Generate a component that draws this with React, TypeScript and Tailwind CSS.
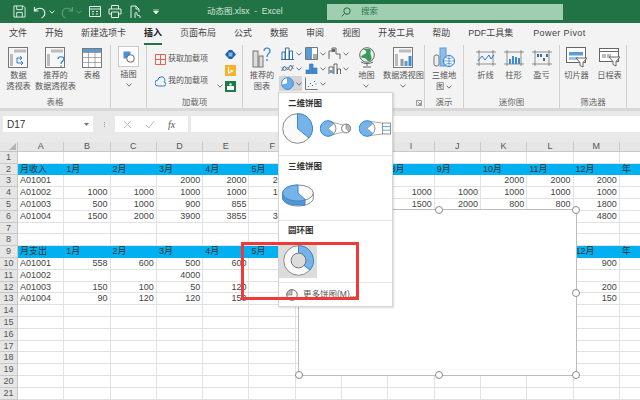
import type { ReactNode } from "react";

const tabs = ["文件", "开始", "新建选项卡", "插入", "页面布局", "公式", "数据", "审阅", "视图", "开发工具", "帮助", "PDF工具集", "Power Pivot"];
const cols = ["A", "B", "C", "D", "E", "F", "G", "H", "I", "J", "K", "L", "M", "N"];
const months = ["1月", "2月", "3月", "4月", "5月", "6月", "7月", "8月", "9月", "10月", "11月", "12月", "年"];

type Row = Record<string, string>;
const rows: Record<number, Row> = {
  3: { A: "A01001", D: "2000", E: "2000", F: "2000", K: "2000", L: "2000", M: "2000" },
  4: { A: "A01002", B: "1000", C: "1000", D: "1000", E: "1000", F: "1000", I: "1000", J: "1000", K: "1000", L: "1000", M: "1000" },
  5: { A: "A01003", B: "500", C: "1000", D: "900", E: "855", I: "1500", J: "2000", K: "800", L: "800", M: "1800" },
  6: { A: "A01004", B: "1500", C: "2000", D: "3900", E: "3855", F: "3000", M: "4800" },
  10: { A: "A01001", B: "558", C: "600", D: "500", E: "600", M: "900" },
  11: { A: "A01002", D: "4000" },
  12: { A: "A01003", B: "150", C: "100", D: "50", E: "120", M: "200" },
  13: { A: "A01004", B: "90", C: "120", D: "120", E: "150", M: "150" },
};

const rowNumbers = Array.from({ length: 21 }, (_, i) => i + 1);

function Chevron({ className = "" }: { className?: string }) {
  return (
    <svg width="6" height="4" viewBox="0 0 6 4" className={className}>
      <path d="M0.6 0.6 3 3.2 5.4 0.6" fill="none" stroke="#666" strokeWidth="0.9" />
    </svg>
  );
}

function Group({ label, width, children, launcher }: { label: string; width: string; children: ReactNode; launcher?: boolean }) {
  return (
    <div className={`relative flex h-[63px] shrink-0 flex-col border-r border-[#d0d0d0] ${width}`}>
      <div className="flex min-h-0 flex-1">{children}</div>
      <div className="h-[12px] pb-[1px] text-center text-[8.5px] leading-[12px] text-[#666]">{label}</div>
      {launcher && (
        <svg width="6" height="6" viewBox="0 0 6 6" className="absolute bottom-[2px] right-[2px]">
          <path d="M0.5 0.5H5.5V5.5H0.5Z M1.5 1.5 4.5 4.5 M4.5 2.5V4.5H2.5" fill="none" stroke="#777" strokeWidth="0.7" />
        </svg>
      )}
    </div>
  );
}

function BigButton({ width, icon, lines, chevron }: { width: string; icon: ReactNode; lines: string[]; chevron?: boolean }) {
  return (
    <div className={`flex shrink-0 flex-col items-center ${width}`}>
      <div className="flex h-[25px] items-center justify-center">{icon}</div>
      <div className="flex flex-col items-center whitespace-nowrap text-[8.2px] leading-[11px] text-[#555]">
        {lines.map((l) => (
          <span key={l}>{l}</span>
        ))}
        {chevron && <Chevron className="mt-[3px]" />}
      </div>
    </div>
  );
}

function SheetIcon({ accent }: { accent: "arrows" | "help" }) {
  return (
    <svg width="22" height="21" viewBox="0 0 22 21">
      <rect x="0.5" y="0.5" width="19" height="20" fill="#f7f7f7" stroke="#777" />
      <rect x="6" y="2.5" width="12" height="3" fill="#bbb" />
      <rect x="2" y="7" width="3" height="12" fill="#bbb" />
      {accent === "arrows" ? (
        <path d="M9 16V11H14M12 9l2 2-2 2M9 16h6M13 14l2 2-2 2" fill="none" stroke="#2b7cd3" strokeWidth="1" />
      ) : (
        <path d="M13 12c0-3 6-3 6 0 0 2-3 2-3 5M16 18.5v1.5" fill="none" stroke="#2b7cd3" strokeWidth="1.2" />
      )}
    </svg>
  );
}

function TableIcon() {
  return (
    <svg width="20" height="20" viewBox="0 0 20 20">
      <rect x="0.5" y="0.5" width="19" height="19" fill="#fff" stroke="#777" />
      <rect x="1" y="1" width="18" height="3.5" fill="#5b9bd5" />
      <path d="M0.5 4.5H19.5M0.5 9.5H19.5M0.5 14.5H19.5M6.5 1V19M13 1V19" stroke="#888" strokeWidth="0.7" />
    </svg>
  );
}

function Pie({ size = 31 }: { size?: number }) {
  return (
    <svg width={size} height={size} viewBox="0 0 31 31">
      <circle cx="15.5" cy="15.5" r="14.8" fill="#fafafa" stroke="#8a8a8a" />
      <path d="M15.5 15.5V0.7A14.8 14.8 0 0 1 27 25Z" fill="#76b3e8" stroke="#3a87cc" />
    </svg>
  );
}

function PieOfPie() {
  return (
    <svg width="32" height="17" viewBox="0 0 32 17">
      <path d="M8 1 23 5M8 16 23 12" stroke="#888" strokeWidth="0.7" />
      <circle cx="8" cy="8.5" r="7.8" fill="#76b3e8" stroke="#3a87cc" />
      <path d="M8 8.5 14 3.5A7.8 7.8 0 0 1 14 13.5Z" fill="#fff" stroke="#888" strokeWidth="0.7" />
      <circle cx="26" cy="8.5" r="4.4" fill="#fff" stroke="#777" />
      <path d="M26 8.5V4.1A4.4 4.4 0 0 1 29 12Z" fill="#b5b5b5" stroke="#777" strokeWidth="0.6" />
    </svg>
  );
}

function BarOfPie() {
  return (
    <svg width="32" height="17" viewBox="0 0 32 17">
      <path d="M8 1 23 3M8 16 23 14" stroke="#888" strokeWidth="0.7" />
      <circle cx="8" cy="8.5" r="7.8" fill="#76b3e8" stroke="#3a87cc" />
      <path d="M8 8.5 14 3.5A7.8 7.8 0 0 1 14 13.5Z" fill="#fff" stroke="#888" strokeWidth="0.7" />
      <rect x="23.5" y="3" width="8" height="11" fill="#fff" stroke="#777" strokeWidth="0.8" />
      <path d="M23.5 6.6H31.5M23.5 10.2H31.5" stroke="#5b9bd5" strokeWidth="0.9" />
    </svg>
  );
}

function Pie3d() {
  return (
    <svg width="32" height="23" viewBox="0 0 32 23">
      <path d="M0.7 9V14C0.7 18.5 7.5 22 16 22S31.3 18.5 31.3 14V9Z" fill="#fff" stroke="#888" />
      <path d="M0.7 9V14C0.7 18.5 7 21.6 23 21V14.5L15 9Z" fill="#4f97d8" stroke="#3a87cc" />
      <ellipse cx="16" cy="9" rx="15.3" ry="8" fill="#fafafa" stroke="#8a8a8a" />
      <path d="M16 9V1C7.5 1 0.7 4.5 0.7 9S7.5 17 16 17C19 17 21.5 16.5 23.5 15.8Z" fill="#76b3e8" stroke="#3a87cc" />
    </svg>
  );
}

function Donut({ size = 31 }: { size?: number }) {
  return (
    <svg width={size} height={size} viewBox="0 0 31 31">
      <circle cx="15.5" cy="15.5" r="14.8" fill="#fafafa" stroke="#8a8a8a" />
      <path d="M15.5 0.7A14.8 14.8 0 0 1 27 25L21 20.5A7.4 7.4 0 0 0 15.5 8.1Z" fill="#76b3e8" stroke="#3a87cc" />
      <circle cx="15.5" cy="15.5" r="7.4" fill="#dcdcdc" stroke="#777" />
    </svg>
  );
}

function SmallIcon({ children, active }: { children: ReactNode; active?: boolean }) {
  return (
    <div className={`flex h-[15px] w-[23px] items-center gap-[2px] pl-[2px] ${active ? "bg-[#d4d4d4]" : ""}`}>
      <svg width="13" height="13" viewBox="0 0 13 13" className="shrink-0">
        {children}
      </svg>
      <Chevron />
    </div>
  );
}

function Handle({ position }: { position: string }) {
  return <div className={`absolute h-[8px] w-[8px] rounded-full border border-[#8a8a8a] bg-white ${position}`} />;
}

export default function App() {
  return (
    <div className="relative flex h-[400px] w-[640px] flex-col overflow-hidden bg-white font-['Liberation_Sans','Noto_Sans_CJK_SC',sans-serif] text-[#444]">
      {/* title bar */}
      <div className="flex h-[23px] shrink-0 items-center bg-[#217346] pl-[13px]">
        <svg width="13" height="13" viewBox="0 0 14 14" fill="none" stroke="#e4efe8" strokeWidth="1">
          <path d="M1 1H11L13 3V13H1Z M4 1V5H10V1 M4 13V8H10V13" />
        </svg>
        <svg width="14" height="14" viewBox="0 0 14 14" fill="none" stroke="#e4efe8" strokeWidth="1.2" className="ml-[7px]">
          <path d="M1.5 2V6H5.5M1.5 6C4 2.5 10 2 11.5 6.5 12.5 9.5 10.5 12 8.5 13" />
        </svg>
        <Chevron className="ml-[2px] brightness-[3]" />
        <svg width="14" height="14" viewBox="0 0 14 14" fill="none" stroke="#5f9c7b" strokeWidth="1.2" className="ml-[5px]">
          <path d="M12.5 2V6H8.5M12.5 6C10 2.5 4 2 2.5 6.5 1.5 9.5 3.5 12 5.5 13" />
        </svg>
        <svg width="6" height="4" viewBox="0 0 6 4" className="ml-[2px]">
          <path d="M0.6 0.6 3 3.2 5.4 0.6" fill="none" stroke="#5f9c7b" />
        </svg>
        <svg width="12" height="11" viewBox="0 0 12 11" fill="none" stroke="#e4efe8" className="ml-[7px]">
          <path d="M0.5 0.5H11.5V10.5H0.5Z M0.5 3H11.5 M3 5.5H5 M3 8H5 M7 5.5H9 M7 8H9" />
        </svg>
        <svg width="14" height="13" viewBox="0 0 14 13" fill="none" stroke="#e4efe8" className="ml-[7px]">
          <path d="M3.5 4V0.5H10.5V4 M3.5 9H1V4H13V9H10.5 M3.5 7H10.5V12.5H3.5Z" />
        </svg>
        <svg width="11" height="14" viewBox="0 0 11 14" fill="none" stroke="#e4efe8" className="ml-[8px]">
          <path d="M1 13V1H6L9 4V7 M6 1V4H9 M5 13V8.5A1 1 0 0 1 7 8.5V10L10 11V13" />
        </svg>
        <svg width="6" height="5" viewBox="0 0 6 5" className="ml-[12px]">
          <path d="M0 0H6M0.5 2 3 5 5.5 2Z" stroke="#e4efe8" strokeWidth="0.8" fill="#e4efe8" />
        </svg>
        <span className="ml-[48px] w-[120px] whitespace-pre text-[8.5px] text-[#d3e6da]">动态图.xlsx  -  Excel</span>
        <div className="flex h-[16px] w-[236px] items-center bg-[#9fcfb0] pl-[14px]">
          <svg width="10" height="10" viewBox="0 0 10 10" fill="none" stroke="#1f6b40">
            <circle cx="6" cy="4" r="3.2" />
            <path d="M3.6 6.4 0.6 9.4" />
          </svg>
          <span className="ml-[10px] text-[8.5px] text-[#2a7a4c]">搜索</span>
        </div>
      </div>

      {/* tabs */}
      <div className="flex h-[22px] shrink-0 items-center gap-[18px] bg-[#f3f3f3] pl-[9px] text-[9px] text-[#444]">
        {tabs.map((t) => (
          <div key={t} className={`relative flex h-full items-center whitespace-nowrap ${t === "Power Pivot" ? "ml-[2px] tracking-[0.4px]" : ""}`}>
            <span className={t === "插入" ? "font-bold text-[#222]" : ""}>{t}</span>
            {t === "插入" && <div className="absolute bottom-[0px] left-0 right-0 h-[2px] bg-[#217346]" />}
          </div>
        ))}
      </div>

      {/* ribbon */}
      <div className="flex h-[63px] shrink-0 bg-[#f3f3f3]">
        <Group label="表格" width="w-[111px]">
          <BigButton width="w-[37px]" icon={<SheetIcon accent="arrows" />} lines={["数据", "透视表"]} />
          <BigButton width="w-[37px]" icon={<SheetIcon accent="help" />} lines={["推荐的", "数据透视表"]} />
          <BigButton width="w-[36px]" icon={<TableIcon />} lines={["表格"]} />
        </Group>
        <Group label="" width="w-[36px]">
          <div className="flex w-full flex-col items-center text-[8.2px] leading-[11px] text-[#555]">
            <div className="mt-[1px] flex h-[21px] w-[21px] items-center justify-center border border-[#c8c8c8] bg-white">
              <svg width="12" height="12" viewBox="0 0 12 12">
                <rect x="0.5" y="0.5" width="7" height="7" fill="#4a90d9" />
                <circle cx="7.5" cy="7.5" r="3.8" fill="#fff" stroke="#666" />
              </svg>
            </div>
            <span className="mt-[2px]">插图</span>
            <Chevron className="mt-[3px]" />
          </div>
        </Group>
        <Group label="加载项" width="w-[96px]">
          <div className="flex w-[68px] shrink-0 flex-col gap-[10px] pl-[8px] pt-[8px] text-[8px] leading-[12px] text-[#555]">
            <div className="flex items-center gap-[2px] whitespace-nowrap">
              <svg width="11" height="11" viewBox="0 0 11 11" fill="none" stroke="#e0644a">
                <path d="M0.5 0.5H10.5V10.5H0.5Z M5.5 0.5V10.5 M0.5 5.5H10.5" />
              </svg>
              <span>获取加载项</span>
            </div>
            <div className="flex items-center gap-[2px] whitespace-nowrap">
              <svg width="11" height="12" viewBox="0 0 11 12" fill="none" stroke="#2b7cd3">
                <path d="M3 11H8.5A2 2 0 0 0 9 7 3 3 0 0 0 6 2 3 3 0 0 0 3 5 3 3 0 0 0 3 11Z" />
              </svg>
              <span>我的加载项</span>
            </div>
          </div>
          <div className="flex w-[10px] shrink-0 items-end pb-[8px] pl-[1px]">
            <Chevron className="ml-[1px]" />
          </div>
          <div className="flex flex-col items-center gap-[5.5px] pt-[5px]">
            <svg width="11" height="9" viewBox="0 0 11 9">
              <path d="M0 4.5 4 0H7L11 4.5 7 9H4Z" fill="#1f5fa8" />
              <rect x="3.5" y="2.5" width="4" height="4" fill="#7db4e8" />
            </svg>
            <svg width="11" height="11" viewBox="0 0 11 11">
              <rect width="11" height="11" fill="#f4b32a" />
              <path d="M3.5 2V8L7.5 6 5.5 5" fill="none" stroke="#fff" strokeWidth="1.1" />
            </svg>
            <svg width="11" height="11" viewBox="0 0 11 11">
              <rect width="11" height="11" fill="#1e7a4b" />
              <path d="M2 5H9V9H2Z" fill="#fff" />
              <circle cx="5.5" cy="3.5" r="1.3" fill="#cde8d8" />
            </svg>
          </div>
        </Group>
        <Group label="" width="w-[182px]" launcher>
          <div className="w-[36px] shrink-0 pl-[2px]">
            <BigButton
              width="w-[34px]"
              icon={
                <svg width="20" height="21" viewBox="0 0 20 21" fill="none">
                  <rect x="1" y="4" width="5" height="16" fill="#ddd" stroke="#777" />
                  <rect x="7" y="9" width="4" height="11" fill="#ddd" stroke="#777" />
                  <path d="M12 4c0-4 6-4 6 0 0 2.500-3 2.500-3 6M15 12v2" stroke="#2b7cd3" strokeWidth="1.2" />
                </svg>
              }
              lines={["推荐的", "图表"]}
            />
          </div>
          <div className="grid w-[71px] shrink-0 grid-cols-3 content-start pt-[1px]">
            <SmallIcon>
              <path d="M1 12V5H4V12M4.500 12V1H8V12M8.500 12V4H11.500V12M0 12.500H13" fill="#fff" stroke="#2b6fb5" />
            </SmallIcon>
            <SmallIcon>
              <path d="M0.500 0.500H12.500V12.500H0.500Z" fill="#fff" stroke="#777" />
              <path d="M1 1H7V12H1Z" fill="#5b9bd5" />
              <path d="M8 7H12V12H8Z" fill="#aaa" />
            </SmallIcon>
            <SmallIcon>
              <path d="M1 12V4H4V1H8V7H12V12" fill="none" stroke="#666" />
              <path d="M4 2H7V5H4Z" fill="#666" />
            </SmallIcon>
            <SmallIcon>
              <path d="M0.500 9 3.500 4 6.500 8 9.500 3 12.500 7" fill="none" stroke="#2b6fb5" />
              <path d="M0.500 5 3.500 9 6.500 5 9.500 9 12.500 3" fill="none" stroke="#777" />
            </SmallIcon>
            <SmallIcon>
              <path d="M1 12V8H4V12M4.500 12V2H8V12M8.500 12V6H12V12" fill="#3f8ad0" stroke="#2b6fb5" strokeWidth="0.6" />
            </SmallIcon>
            <SmallIcon>
              <path d="M1 12V5H5V12M6 12V2H9V12M9.500 12V7H12.500V12" fill="#fff" stroke="#666" />
              <path d="M1.500 8H4.500V11H1.500Z" fill="#5b9bd5" />
            </SmallIcon>
            <SmallIcon active>
              <circle cx="6.500" cy="6.500" r="5.800" fill="#fff" stroke="#3a87cc" />
              <path d="M6.500 6.500V0.700A5.800 5.800 0 1 1 1 8.300Z" fill="#6aaee8" stroke="#3a87cc" strokeWidth="0.6" />
            </SmallIcon>
            <SmallIcon>
              <path d="M0.500 0.500V12.500H12.500" fill="none" stroke="#777" />
              <path d="M3 9.500h1M5 6.500h1M7 8.500h1M9 4.500h1M10.500 7h1" stroke="#2b7cd3" />
            </SmallIcon>
          </div>
          <BigButton
            width="w-[33px]"
            icon={
              <svg width="18" height="21" viewBox="0 0 18 21" fill="none">
                <circle cx="9" cy="8" r="7.300" fill="#e9f3ec" stroke="#666" />
                <path d="M5 2C7 3 9 4 8 6S4 7 3 10C5 12 7 10 8 12 9 14 12 15 13 13 15 10 11 7 13 4L12 2Z" fill="#3c9a5a" />
                <path d="M3 15C6 17 12 17 15 15M9 16.500V19M5 20H13" stroke="#666" />
              </svg>
            }
            lines={["地图"]}
            chevron
          />
          <BigButton
            width="w-[41px]"
            icon={
              <svg width="21" height="21" viewBox="0 0 21 21">
                <rect x="0.500" y="0.500" width="19" height="20" fill="#f7f7f7" stroke="#777" />
                <rect x="6" y="2.500" width="12" height="3" fill="#bbb" />
                <rect x="2" y="7" width="3" height="12" fill="#bbb" />
                <rect x="7.500" y="12" width="3" height="7" fill="#999" />
                <rect x="11.500" y="14" width="3" height="5" fill="#5b9bd5" />
                <rect x="15.500" y="9" width="3" height="10" fill="#3f8ad0" />
              </svg>
            }
            lines={["数据透视图"]}
            chevron
          />
        </Group>
        <Group label="演示" width="w-[39px]">
          <div className="flex w-full flex-col items-center">
            <div className="flex h-[25px] items-center">
              <svg width="22" height="21" viewBox="0 0 22 21" fill="none">
                <rect x="1" y="8" width="5" height="11" rx="2" fill="#eee" stroke="#777" />
                <rect x="7" y="1" width="6" height="18" fill="#8dbde8" stroke="#5b9bd5" />
                <circle cx="16" cy="14" r="5.500" fill="#fff" stroke="#2b7cd3" />
                <path d="M10.500 14H21.500M16 8.500V19.500M12.500 10.500C15 12 17 12 19.500 10.500M12.500 17.500C15 16 17 16 19.500 17.500" stroke="#2b7cd3" strokeWidth="0.7" />
              </svg>
            </div>
            <div className="flex flex-col items-center whitespace-nowrap text-[8.2px] leading-[11px] text-[#555]">
              <span>三维地</span>
              <span className="flex items-center gap-[2px]">
                图<Chevron />
              </span>
            </div>
          </div>
        </Group>
        <Group label="迷你图" width="w-[96px]">
          <div className="flex w-full justify-center pl-[4px]">
            <BigButton
              width="w-[28px]"
              icon={
                <svg width="20" height="16" viewBox="0 0 20 16" fill="none">
                  <path d="M0 2H20M0 14H20M3 0V16M17 0V16" stroke="#666" strokeWidth="0.7" />
                  <path d="M2 11 6 6 9 10 13 5 15 9 18 5" stroke="#2b7cd3" />
                </svg>
              }
              lines={["折线"]}
            />
            <BigButton
              width="w-[28px]"
              icon={
                <svg width="20" height="16" viewBox="0 0 20 16">
                  <path d="M0 2H20M0 14H20M3 0V16M17 0V16" stroke="#666" strokeWidth="0.7" fill="none" />
                  <path d="M5 9H7V14H5ZM8 6H10V14H8ZM11 7H13V14H11ZM14 8H16V14H14Z" fill="#3f8ad0" />
                </svg>
              }
              lines={["柱形"]}
            />
            <BigButton
              width="w-[28px]"
              icon={
                <svg width="20" height="16" viewBox="0 0 20 16">
                  <path d="M0 2H20M0 14H20M3 0V16M17 0V16" stroke="#666" strokeWidth="0.7" fill="none" />
                  <path d="M5 4H7V7H5ZM8 4H10V7H8ZM14 4H16V7H14Z" fill="#2b6fb5" />
                  <path d="M11 8H13V11H11Z" fill="#666" />
                </svg>
              }
              lines={["盈亏"]}
            />
          </div>
        </Group>
        <Group label="筛选器" width="w-[67px]">
          <BigButton
            width="w-[33px]"
            icon={
              <svg width="22" height="21" viewBox="0 0 22 21" fill="none">
                <rect x="0.500" y="0.500" width="19" height="15" fill="#fff" stroke="#666" />
                <rect x="3" y="5" width="14" height="3.500" fill="#5b9bd5" />
                <rect x="3" y="10" width="9" height="3" fill="#9cc3e6" />
                <path d="M10 11H21L17 15.500V20L14 18.500V15.500Z" fill="#fff" stroke="#666" />
              </svg>
            }
            lines={["切片器"]}
          />
          <BigButton
            width="w-[33px]"
            icon={
              <svg width="22" height="19" viewBox="0 0 22 19" fill="none">
                <rect x="0.500" y="0.500" width="19" height="13" fill="#fff" stroke="#666" />
                <path d="M0.500 3.500H19.500" stroke="#666" />
                <rect x="3" y="6" width="4" height="4" fill="#bbb" />
                <rect x="8" y="6" width="4" height="4" fill="#bbb" />
                <path d="M10 9H21L17 13.500V18L14 16.500V13.500Z" fill="#fff" stroke="#666" />
              </svg>
            }
            lines={["日程表"]}
          />
        </Group>
      </div>

      {/* formula bar */}
      <div className="flex h-[34px] shrink-0 flex-col bg-[#e9e9e9]">
        <div className="h-[3px] shrink-0 bg-[#d8d8d8]" />
        <div className="flex items-start pl-[3px] pt-[5px]">
          <div className="flex h-[16px] w-[90px] items-center justify-between bg-white pl-[4px] pr-[4px] text-[10px] text-[#333]">
            D17
            <svg width="5" height="3" viewBox="0 0 5 3">
              <path d="M0 0H5L2.500 3Z" fill="#777" />
            </svg>
          </div>
          <div className="flex h-[16px] w-[22px] flex-col items-center justify-center gap-[1px]">
            <div className="h-[1px] w-[1px] bg-[#999]" />
            <div className="h-[1px] w-[1px] bg-[#999]" />
            <div className="h-[1px] w-[1px] bg-[#999]" />
          </div>
          <div className="flex h-[16px] w-[73px] items-center bg-white pl-[8px]">
            <svg width="9" height="9" viewBox="0 0 9 9">
              <path d="M1 1 8 8M8 1 1 8" stroke="#bbb" />
            </svg>
            <svg width="10" height="9" viewBox="0 0 10 9" className="ml-[13px]">
              <path d="M1 5 4 8 9 1" fill="none" stroke="#bbb" />
            </svg>
            <span className="ml-[13px] font-['Liberation_Serif',serif] text-[10px] italic text-[#555]">fx</span>
          </div>
          <div className="ml-[3px] h-[16px] flex-1 bg-white" />
        </div>
      </div>

      {/* sheet */}
      <div className="grid flex-1 grid-cols-[18px_repeat(14,46.3px)] auto-rows-[11.8px] content-start text-[9px] leading-[11px] text-[#444]">
        <div className="relative h-[10px] border-b border-r border-[#c6c6c6] bg-[#e6e6e6]">
          <div className="absolute bottom-[1px] right-[1px] h-0 w-0 border-b-[7px] border-l-[7px] border-b-[#b5b5b5] border-l-transparent" />
        </div>
        {cols.map((c) => (
          <div key={c} className="h-[10px] border-b border-r border-[#c9c9c9] bg-[#e6e6e6] text-center leading-[9px] text-[#555]">
            {c === "N" ? "" : c}
          </div>
        ))}
        {rowNumbers.map((n) => {
          const isHead = n === 2 || n === 9;
          return [
            <div key={`h${n}`} className="-mt-[2px] h-[11.8px] border-b border-r border-[#c9c9c9] bg-[#e6e6e6] text-center leading-[11px] text-[#555]">
              {n}
            </div>,
            ...cols.map((c, i) => {
              if (isHead) {
                const text = i === 0 ? (n === 2 ? "月收入" : "月支出") : months[i - 1];
                return (
                  <div key={`${n}${c}`} className="-mt-[2px] h-[11.8px] overflow-visible whitespace-nowrap bg-[#00b0f0] pl-[2px] text-[#333]">
                    {text}
                  </div>
                );
              }
              const val = rows[n]?.[c];
              return (
                <div
                  key={`${n}${c}`}
                  className={`-mt-[2px] h-[11.8px] border-b border-r border-[#e2e2e2] px-[2px] ${c === "A" ? "text-left" : "text-right"}`}
                >
                  {val}
                </div>
              );
            }),
          ];
        })}
      </div>

      {/* chart placeholder */}
      <div className="absolute left-[298px] top-[209px] h-[167px] w-[279px] border border-[#bcbcbc] bg-white">
        <Handle position="left-[136px] -top-[4px]" />
        <Handle position="-right-[4px] -top-[4px]" />
        <Handle position="-right-[4px] top-[79px]" />
        <Handle position="-left-[4px] -bottom-[4px]" />
        <Handle position="left-[136px] -bottom-[4px]" />
        <Handle position="-right-[4px] -bottom-[4px]" />
      </div>

      {/* pie chart dropdown */}
      <div className="absolute left-[278px] top-[92px] flex h-[215px] w-[115px] flex-col border border-[#d4d4d4] bg-white shadow-[1px_1px_2px_rgba(0,0,0,0.15)]">
        <div className="pl-[9px] pt-[4px] text-[8.5px] font-bold leading-[12px] text-[#333]">二维饼图</div>
        <div className="flex h-[46px] items-center gap-[7px] pb-[7px] pl-[3px]">
          <Pie />
          <PieOfPie />
          <BarOfPie />
        </div>
        <div className="border-t border-[#e6e6e6] pl-[9px] pt-[4px] text-[8.5px] font-bold leading-[12px] text-[#333]">三维饼图</div>
        <div className="flex h-[48px] items-start pl-[3px] pt-[12px]">
          <Pie3d />
        </div>
        <div className="border-t border-[#e6e6e6] pl-[9px] pt-[3px] text-[8.5px] font-bold leading-[12px] text-[#333]">圆环图</div>
        <div className="mt-[7px] flex h-[35px] w-[38px] shrink-0 items-center justify-center bg-[#dcdcdc]">
          <Donut />
        </div>
        <div className="mt-[4px] flex flex-1 items-center gap-[5px] border-t border-[#e6e6e6] pl-[7px]">
          <svg width="12" height="12" viewBox="0 0 12 12">
            <circle cx="6" cy="6" r="5.300" fill="#fff" stroke="#666" />
            <path d="M6 6V0.700A5.300 5.300 0 0 0 0.700 6Z" fill="#bbb" stroke="#666" strokeWidth="0.6" />
          </svg>
          <span className="text-[8.5px] text-[#555]">更多饼图(M)...</span>
        </div>
      </div>

      {/* callout */}
      <div className="absolute left-[241px] top-[242px] h-[58px] w-[118px] border-[3px] border-[#f03a3a]" />
    </div>
  );
}
